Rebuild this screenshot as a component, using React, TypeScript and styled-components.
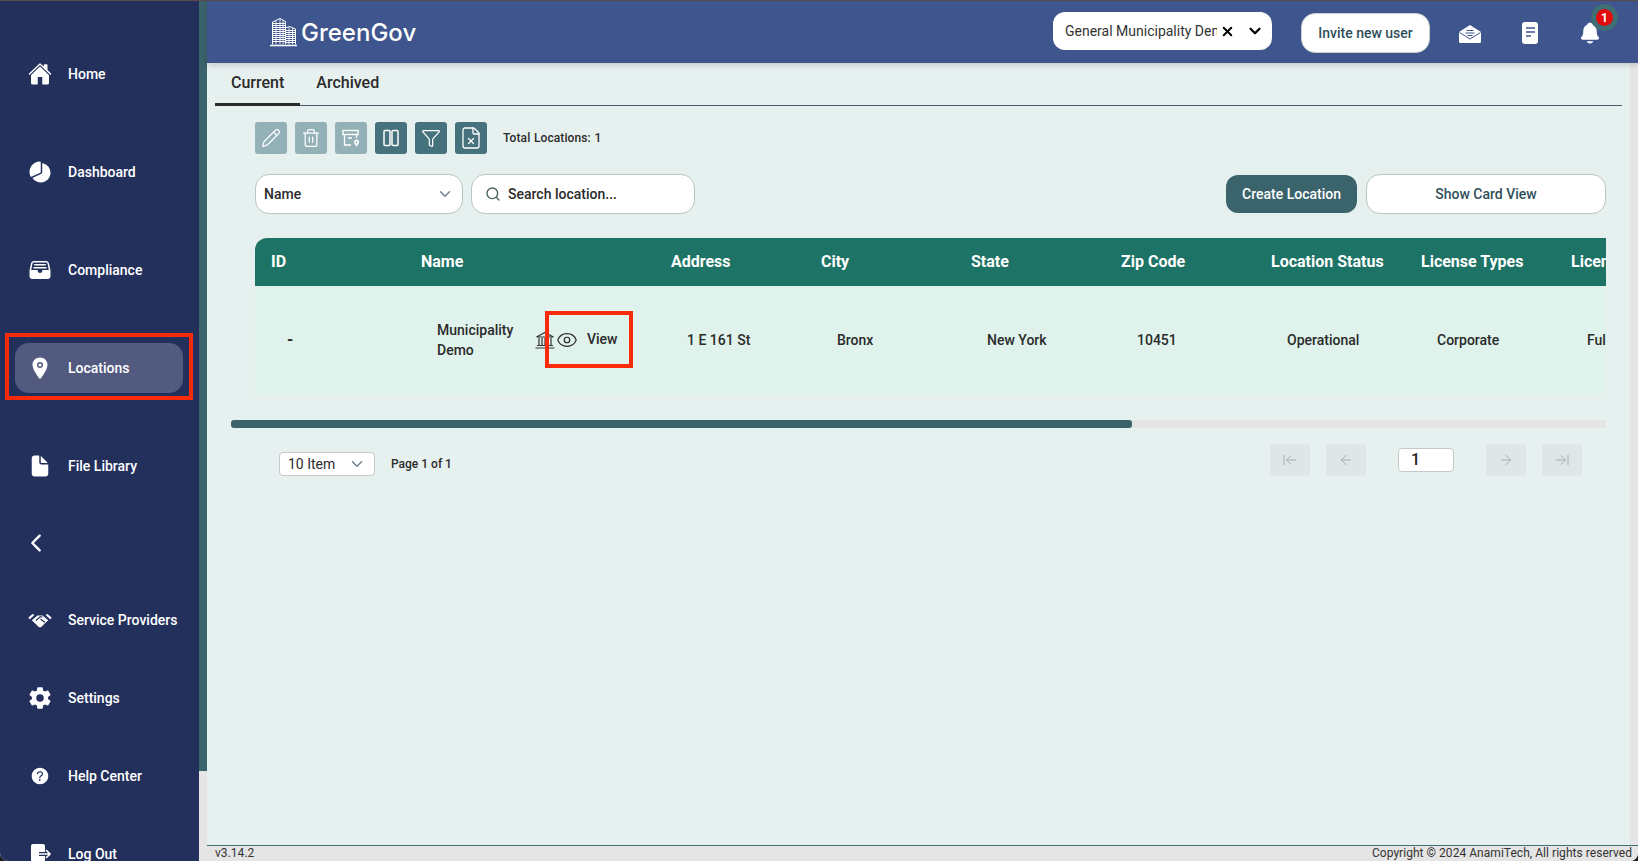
import React from 'react';
import styled, { createGlobalStyle } from 'styled-components';
import { IoHome, IoPieChart, IoFileTrayFull, IoLocation, IoDocument, IoChevronBack, IoSettingsSharp, IoHelpCircle, IoNotifications } from 'react-icons/io5';
import { ChevronDown, X, Search, Pencil, Trash2, Funnel, FileX, Eye, ArrowLeft, ArrowRight, ArrowLeftToLine, ArrowRightToLine } from 'lucide-react';

const Global = createGlobalStyle`
  html, body { margin: 0; padding: 0; height: 100%; background: #1b1b1b; overflow: hidden; }
  body { font-family: Roboto, "Liberation Sans", sans-serif; }
  * { box-sizing: border-box; }
`;

const Frame = styled.div`
  position: relative; display: flex; width: 100vw; height: 100vh; overflow: hidden;
  border-top: 1px solid #5b4a4c; border-radius: 0 0 8px 8px; background: #e6f0ee;
`;
const Sidebar = styled.nav`
  flex: 0 0 199px; height: 100%; overflow: hidden; background: #23305c; padding: 48px 16px 0 15px;
`;
const NavGroup = styled.div<{ $gap: number }>`
  display: flex; flex-direction: column; gap: ${p => p.$gap}px;
`;
const NavItem = styled.a<{ $active?: boolean }>`
  display: flex; align-items: center; flex: 0 0 50px; height: 50px; padding-left: 13px; gap: 16px;
  border-radius: 14px; color: #fff; font-size: 14px; font-weight: 500; white-space: nowrap;
  background: ${p => (p.$active ? '#535a80' : 'transparent')};
  svg { flex: 0 0 24px; width: 24px; height: 24px; }
`;
const HelpIcon = styled(IoHelpCircle)`
  transform: scale(.92);
`;
const CollapseRow = styled.div`
  display: flex; align-items: center; height: 24px; margin: 40px 0; padding-left: 8px; color: #fff;
`;
const PageScroll = styled.div`
  flex: 0 0 8px; height: 100%; background: #e5e5e5;
`;
const PageThumb = styled.div`
  height: 770px; background: #3a636b;
`;
const Main = styled.div`
  flex: 1; min-width: 0; display: flex; flex-direction: column; height: 100%;
`;
const Header = styled.header`
  position: relative; z-index: 2; flex: 0 0 62px; display: flex; align-items: flex-start; background: #3f558e;
  box-shadow: 0 2px 6px rgba(0,0,0,.16); padding-left: 63px; color: #fff;
`;
const Brand = styled.div`
  display: flex; align-items: center; gap: 4px; height: 62px; margin-right: auto;
`;
const BrandName = styled.span`
  font-family: Inter, Roboto, sans-serif; font-size: 24px; font-weight: 500; color: #fff;
`;
const OrgSelect = styled.div`
  display: flex; align-items: center; width: 219px; height: 38px; margin-top: 11px; padding: 0 8px 0 12px;
  background: #fff; border-radius: 12px; color: #000;
`;
const OrgText = styled.span`
  width: 152px; overflow: hidden; white-space: nowrap; font-size: 14px; color: #333;
`;
const OrgClear = styled.span`
  display: flex; margin-left: 3px; margin-right: 11px;
`;
const InviteButton = styled.button`
  width: 129px; height: 40px; margin: 12px 0 0 29px; background: #fff; border: 1px solid #c4cfcf; border-radius: 14px;
  font: 500 14px Roboto, sans-serif; color: #2f4f5a;
`;
const HeaderIcon = styled.span`
  position: relative; display: flex; justify-content: center; width: 24px; margin-top: 20px; color: #fff;
  svg { width: 24px; height: 24px; }
`;
const HeaderIcons = styled.div`
  display: flex; gap: 36px; margin: 0 36px 0 28px;
`;
const Badge = styled.span`
  position: absolute; top: -17px; left: 13px; width: 27px; height: 27px; border-radius: 50%;
  background: #e30c0c; border: 5px solid #3f6f74; color: #fff; font-size: 12px; font-weight: 700;
  display: flex; align-items: center; justify-content: center;
`;
const BodyRow = styled.div`
  flex: 1; min-height: 0; display: flex;
`;
const Content = styled.main`
  flex: 1; min-width: 0; padding: 0 8px;
`;
const RightScroll = styled.div`
  flex: 0 0 8px; background: #e5e5e5;
`;
const Tabs = styled.div`
  display: flex; height: 43px; border-bottom: 1px solid #465a68;
`;
const Tab = styled.div<{ $active?: boolean }>`
  display: flex; align-items: center; justify-content: center; height: 43px; padding: 0 16px 1px; font-size: 16px; font-weight: 500; color: #2b2b2b;
  border-bottom: 3px solid ${p => (p.$active ? '#2b2b2b' : 'transparent')};
`;
const Panel = styled.section`
  padding: 16px 16px 0;
`;
const Inner = styled.div`
  padding-left: 24px;
`;
const Toolbar = styled.div`
  display: flex; align-items: center; gap: 8px; height: 32px;
`;
const ToolButton = styled.button<{ $disabled?: boolean }>`
  display: flex; align-items: center; justify-content: center; width: 32px; height: 32px; padding: 0; border: 0; border-radius: 3px;
  background: ${p => (p.$disabled ? '#93b1b6' : '#45727c')}; color: #fff;
`;
const Total = styled.span`
  margin-left: 8px; font-size: 12px; font-weight: 500; color: #2b2b2b; letter-spacing: .1px; word-spacing: .5px;
`;
const Filters = styled.div`
  display: flex; align-items: center; margin-top: 20px; height: 40px;
`;
const Field = styled.div<{ $w: number }>`
  display: flex; align-items: center; width: ${p => p.$w}px; height: 40px; background: #fff;
  border: 1px solid #b9c5c3; border-radius: 14px; font-size: 14px; font-weight: 500; color: #2b2b2b;
`;
const NameField = styled(Field)`
  justify-content: space-between; padding: 0 8px 0 8px; margin-right: 8px; color: #2b2b2b;
  svg { color: #6e8296; }
`;
const SearchField = styled(Field)`
  padding-left: 13px; gap: 7px; margin-right: auto;
  svg { color: #42605c; }
`;
const CreateButton = styled.button`
  width: 131px; height: 38px; margin-right: 9px; border: 0; border-radius: 12px; background: #3a636b; color: #fff;
  font: 500 14px Roboto, sans-serif;
`;
const CardButton = styled.button`
  width: 240px; height: 40px; border: 1px solid #b9c5c3; border-radius: 14px; background: #fff; color: #2f4f5a;
  font: 500 14px Roboto, sans-serif;
`;
const TableWrap = styled.div`
  margin-top: 24px; overflow: hidden; border-top-left-radius: 12px;
`;
const TableRow = styled.div<{ $head?: boolean }>`
  display: grid; grid-template-columns: 150px 250px repeat(7, 150px); width: 1500px; align-items: center;
  height: ${p => (p.$head ? 48 : 108)}px;
  background: ${p => (p.$head ? '#1d7365' : '#dff2ec')};
`;
const HeadCell = styled.div`
  padding: 0 0 2px 16px; color: #fff; font-size: 16px; font-weight: 700; white-space: nowrap;
`;
const Cell = styled.div`
  padding-left: 32px; color: #2b2b2b; font-size: 14px; font-weight: 500; line-height: 20px; white-space: nowrap;
`;
const DashCell = styled(Cell)`
  font-size: 16px; font-weight: 700;
`;
const NameCell = styled(Cell)`
  display: flex; align-items: center; white-space: normal;
`;
const NameText = styled.span`
  flex: 0 0 98px;
`;
const ViewEye = styled(Eye)`
  margin-left: 1px; flex: 0 0 22px;
`;
const ViewLabel = styled.span`
  margin-left: 9px; margin-top: -2px;
`;
const Track = styled.div`
  height: 8px; margin-top: 26px; background: #e5e5e5; border-radius: 2px;
`;
const Thumb = styled.div`
  width: 901px; height: 8px; border-radius: 3px; background: #3a636b;
`;
const Pager = styled.div`
  display: flex; align-items: center; height: 32px; margin-top: 16px; padding: 0 24px 0 48px;
`;
const PageSize = styled.div`
  display: flex; align-items: center; justify-content: space-between; width: 96px; height: 24px; margin-top: 8px; padding: 0 8px 0 8px;
  background: #fff; border: 1px solid #c5c9c9; border-radius: 4px; font-size: 14px; color: #2b2b2b;
  svg { color: #6e8296; }
`;
const PageInfo = styled.span`
  margin: 8px auto 0 16px; font-size: 12px; font-weight: 500; color: #2b2b2b;
`;
const PageButton = styled.button`
  display: flex; align-items: center; justify-content: center; width: 40px; height: 32px; padding: 0; border: 0; border-radius: 4px;
  background: #dfe6e6; color: #a4a8a8;
`;
const PageGroup = styled.div`
  display: flex; gap: 16px;
`;
const PageInput = styled.div`
  width: 56px; height: 24px; margin: 0 32px; padding-left: 12px; background: #fff; border: 1px solid #c5c9c9; border-radius: 4px;
  font: 500 16px/22px Roboto, sans-serif; color: #222;
`;
const Footer = styled.footer`
  flex: 0 0 16px; display: flex; align-items: center; justify-content: space-between; padding: 0 6px 0 8px;
  background: #e5e5e5; border-top: 1px solid #3f6f74; font-size: 12px; line-height: 15px; color: #333; letter-spacing: .04px;
`;
const Callout = styled.div<{ $x: number; $y: number; $w: number; $h: number }>`
  position: absolute; left: ${p => p.$x}px; top: ${p => p.$y}px; width: ${p => p.$w}px; height: ${p => p.$h}px;
  border: 4px solid #fb2a0b; z-index: 5; pointer-events: none;
`;

const BuildingLogo = () => (
  <svg width="27" height="30" viewBox="0 0 27 30" fill="none" stroke="#fff">
    <path d="M2.500 27.500V5L10 1.500 15.500 4.500V27.500M15.500 11l4-1.500 6 2.500v15.500" strokeWidth="1" />
    <path d="M2.500 6.500h13M2.500 8.500h13M2.500 10.500h13M2.500 12.500h13M2.500 14.500h13M2.500 16.500h13M2.500 18.500h13M2.500 20.500h13M2.500 22.500h13M2.500 24.500h13M15.500 13.500h10M15.500 15.500h10M15.500 17.500h10M15.500 19.500h10M15.500 21.500h10M15.500 23.500h10M15.500 25.500h10" strokeWidth="1.100" />
    <path d="M6 4v23.500M10 2v25.500M13 3v24.500M19 10v17.500M22.500 11v16.500" strokeWidth=".8" />
    <path d="M0 28.500h27" strokeWidth="1.600" />
  </svg>
);
const HandshakeIcon = () => (
  <svg viewBox="0 0 24 24">
    <path d="M1 10.500L5.500 6.500M23 10.500L18.500 6.500M3 8.500l-.5.5" fill="none" stroke="#fff" strokeWidth="2.200" />
    <path d="M3.800 12.200L9.500 7.500h5l5.700 4.700-6.700 6.500c-.8.800-2.200.8-3 0z" fill="#fff" />
    <path d="M8 12.500L12 8.800h2.300M12.500 11l4.500 3.500" fill="none" stroke="#23305c" strokeWidth="1.200" />
  </svg>
);
const LogoutIcon = () => (
  <svg viewBox="0 0 24 24">
    <path d="M5 2h10a2 2 0 0 1 2 2v6h-6v4h6v6a2 2 0 0 1-2 2H5a2 2 0 0 1-2-2V4a2 2 0 0 1 2-2z" fill="#fff" />
    <path d="M9 12h13M18 8l4 4-4 4" fill="none" stroke="#fff" strokeWidth="1.600" />
  </svg>
);
const OpenMailIcon = () => (
  <svg viewBox="0 0 24 24">
    <path d="M1 11L12 4l11 7v9.500a1.500 1.500 0 0 1-1.500 1.500h-19A1.500 1.500 0 0 1 1 20.500z" fill="#fff" />
    <path d="M1.500 11.500L12 18l10.500-6.500M8.500 9.500h7M7.500 12h9M9.500 14.500h5" fill="none" stroke="#3f558e" strokeWidth="1" />
  </svg>
);
const NoteIcon = () => (
  <svg viewBox="0 0 24 24">
    <rect x="4" y="1" width="16" height="22" rx="3" fill="#fff" />
    <path d="M8 7h9M8 11h9M8 15h5" fill="none" stroke="#3f558e" strokeWidth="1.600" />
  </svg>
);
const ArchivePinIcon = () => (
  <svg width="20" height="20" viewBox="0 0 20 20" fill="none" stroke="#fff" strokeWidth="1.400">
    <rect x="2" y="2.500" width="15" height="4" />
    <path d="M3.500 6.500V17H10M15.500 6.500V10M7 10h4" />
    <path d="M15.500 11.500a2.500 2.500 0 0 1 2.500 2.500c0 1.700-2.500 4.500-2.500 4.500S13 15.700 13 14a2.500 2.500 0 0 1 2.500-2.500z" fill="#fff" stroke="none" />
    <circle cx="15.500" cy="14" r=".9" fill="#93b1b6" stroke="none" />
  </svg>
);
const ColumnsIcon = () => (
  <svg width="20" height="20" viewBox="0 0 20 20" fill="none" stroke="#fff" strokeWidth="1.500">
    <rect x="3" y="2.500" width="6" height="15" rx="1" />
    <rect x="11" y="2.500" width="6" height="15" rx="1" />
  </svg>
);
const BankIcon = () => (
  <svg width="20" height="20" viewBox="0 0 20 20" fill="none" stroke="#333" strokeWidth="1.200">
    <path d="M1.500 7L10 2.500 18.500 7zM4 8v7M7 8v7M13 8v7M16 8v7M10 8v7M2 15.500h16M0.500 18h19" />
  </svg>
);

export default function App() {
  const cols = ['ID', 'Name', 'Address', 'City', 'State', 'Zip Code', 'Location Status', 'License Types', 'License Status'];
  return (
    <>
      <Global />
      <Frame>
        <Sidebar>
          <NavGroup $gap={48}>
            <NavItem><IoHome />Home</NavItem>
            <NavItem><IoPieChart />Dashboard</NavItem>
            <NavItem><IoFileTrayFull />Compliance</NavItem>
            <NavItem $active><IoLocation />Locations</NavItem>
            <NavItem><IoDocument />File Library</NavItem>
          </NavGroup>
          <CollapseRow><IoChevronBack size={26} /></CollapseRow>
          <NavGroup $gap={28}>
            <NavItem><HandshakeIcon />Service Providers</NavItem>
            <NavItem><IoSettingsSharp />Settings</NavItem>
            <NavItem><HelpIcon />Help Center</NavItem>
            <NavItem><LogoutIcon />Log Out</NavItem>
          </NavGroup>
        </Sidebar>
        <PageScroll><PageThumb /></PageScroll>
        <Main>
          <Header>
            <Brand><BuildingLogo /><BrandName>GreenGov</BrandName></Brand>
            <OrgSelect>
              <OrgText>General Municipality Demo</OrgText>
              <OrgClear><X size={15} strokeWidth={3.2} /></OrgClear>
              <ChevronDown size={18} strokeWidth={3} />
            </OrgSelect>
            <InviteButton>Invite new user</InviteButton>
            <HeaderIcons>
              <HeaderIcon><OpenMailIcon /></HeaderIcon>
              <HeaderIcon><NoteIcon /></HeaderIcon>
              <HeaderIcon><IoNotifications /><Badge>1</Badge></HeaderIcon>
            </HeaderIcons>
          </Header>
          <BodyRow>
            <Content>
              <Tabs>
                <Tab $active>Current</Tab>
                <Tab>Archived</Tab>
              </Tabs>
              <Panel>
                <Inner>
                  <Toolbar>
                    <ToolButton $disabled><Pencil size={20} strokeWidth={1.5} /></ToolButton>
                    <ToolButton $disabled><Trash2 size={20} strokeWidth={1.5} /></ToolButton>
                    <ToolButton $disabled><ArchivePinIcon /></ToolButton>
                    <ToolButton><ColumnsIcon /></ToolButton>
                    <ToolButton><Funnel size={20} strokeWidth={1.5} /></ToolButton>
                    <ToolButton><FileX size={24} strokeWidth={1.3} /></ToolButton>
                    <Total>Total Locations: 1</Total>
                  </Toolbar>
                  <Filters>
                    <NameField $w={208}>Name<ChevronDown size={18} strokeWidth={2} /></NameField>
                    <SearchField $w={224}><Search size={16} strokeWidth={2} />Search location...</SearchField>
                    <CreateButton>Create Location</CreateButton>
                    <CardButton>Show Card View</CardButton>
                  </Filters>
                  <TableWrap>
                    <TableRow $head>
                      {cols.map(c => <HeadCell key={c}>{c}</HeadCell>)}
                    </TableRow>
                    <TableRow>
                      <DashCell>-</DashCell>
                      <NameCell>
                        <NameText>Municipality Demo</NameText>
                        <BankIcon />
                        <ViewEye size={22} strokeWidth={1.3} />
                        <ViewLabel>View</ViewLabel>
                      </NameCell>
                      <Cell>1 E 161 St</Cell>
                      <Cell>Bronx</Cell>
                      <Cell>New York</Cell>
                      <Cell>10451</Cell>
                      <Cell>Operational</Cell>
                      <Cell>Corporate</Cell>
                      <Cell>Full</Cell>
                    </TableRow>
                  </TableWrap>
                </Inner>
                <Track><Thumb /></Track>
                <Pager>
                  <PageSize>10 Item<ChevronDown size={18} strokeWidth={2} /></PageSize>
                  <PageInfo>Page 1 of 1</PageInfo>
                  <PageGroup>
                    <PageButton><ArrowLeftToLine size={16} strokeWidth={1.4} /></PageButton>
                    <PageButton><ArrowLeft size={16} strokeWidth={1.4} /></PageButton>
                  </PageGroup>
                  <PageInput>1</PageInput>
                  <PageGroup>
                    <PageButton><ArrowRight size={16} strokeWidth={1.4} /></PageButton>
                    <PageButton><ArrowRightToLine size={16} strokeWidth={1.4} /></PageButton>
                  </PageGroup>
                </Pager>
              </Panel>
            </Content>
            <RightScroll />
          </BodyRow>
          <Footer><span>v3.14.2</span><span>Copyright © 2024 AnamiTech, All rights reserved</span></Footer>
        </Main>
        <Callout $x={5} $y={332} $w={188} $h={67} />
        <Callout $x={545} $y={310} $w={88} $h={57} />
      </Frame>
    </>
  );
}
